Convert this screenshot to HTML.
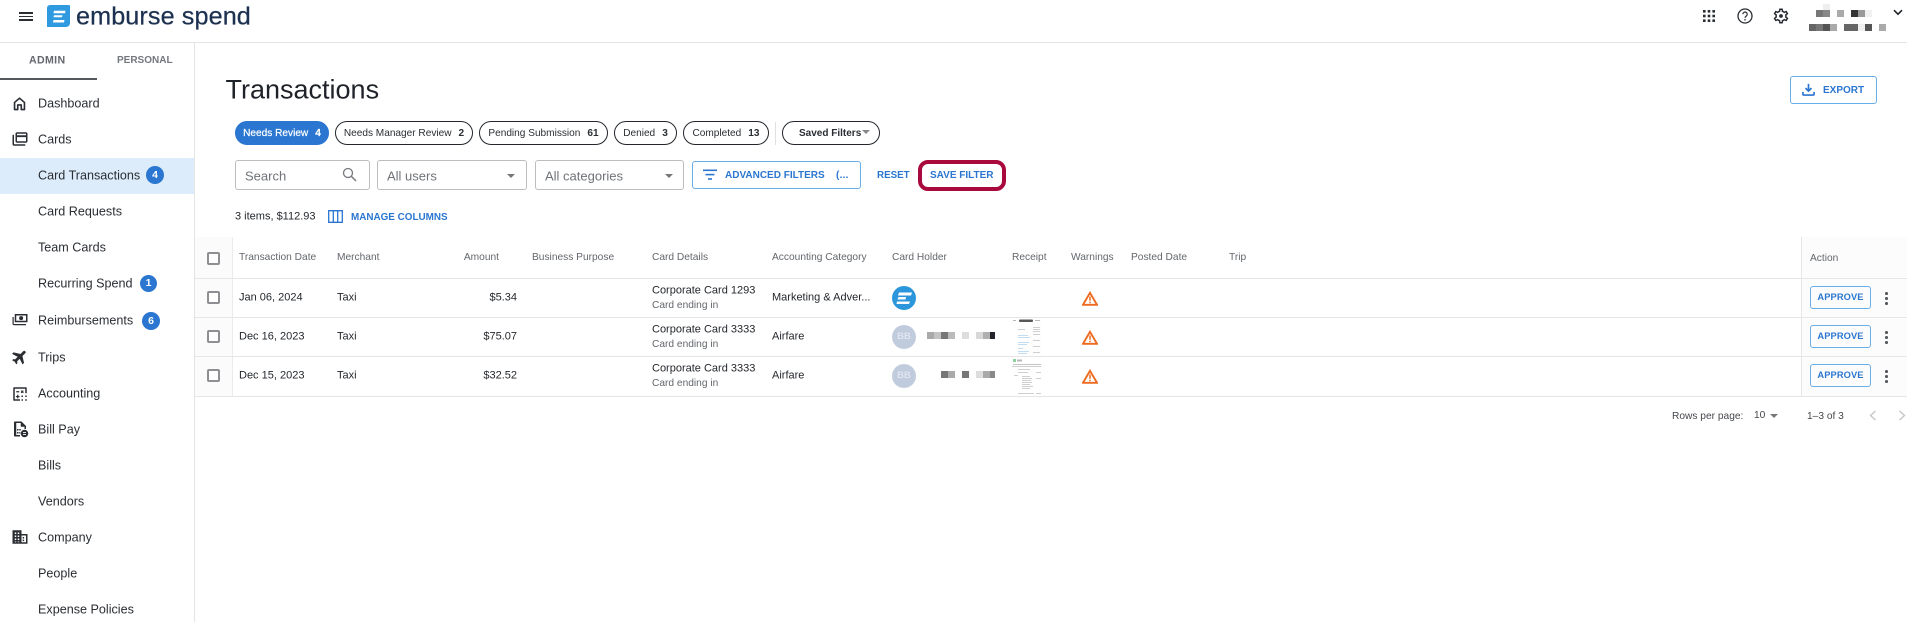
<!DOCTYPE html>
<html><head><meta charset="utf-8"><title>Transactions</title>
<style>
html,body{margin:0;padding:0;background:#fff}
body{width:1907px;height:622px;overflow:hidden;position:relative;font-family:"Liberation Sans",Arial,sans-serif;color:#1f2329}
.t{position:absolute;white-space:pre;line-height:1;transform:translateY(-50%)}
.r{position:absolute}
.nav{font-size:12.6px;left:38px;color:#2a2e33}
.ic{position:absolute;width:18px;height:18px;left:11px;fill:#2a2e33}
.badge{position:absolute;border-radius:50%;background:#2a76d0;color:#fff;font-size:10.5px;font-weight:700;text-align:center;width:18px;height:18px;line-height:18px}
.chip{position:absolute;top:121px;height:24px;box-sizing:border-box;border:1px solid #23272c;border-radius:12px;font-size:10.1px;line-height:23px;white-space:pre;text-align:center;color:#2a2e33;background:#fff}
.chip b{font-weight:700;margin-left:7px}
.box{position:absolute;box-sizing:border-box;border:1px solid #bdbdbd;border-radius:3px;top:160px;height:30px}
.ph{font-size:13px;color:#6f7378}
.th{font-size:10.2px;color:#63676c}
.td{font-size:11px;color:#23272c}
.sub{font-size:10.2px;color:#63676c}
.blue{color:#2a76d0;font-weight:700}
.line{position:absolute;left:195px;width:1712px;height:1px;background:#e6e6e6}
.cb{position:absolute;left:207px;width:13px;height:13px;box-sizing:border-box;border:2px solid #8d8f92;border-radius:2px;background:#fff}
.appr{position:absolute;left:1810px;width:61px;height:23px;box-sizing:border-box;border:1px solid #6aaee8;border-radius:3px;color:#2a76d0;font-weight:700;font-size:9.3px;line-height:21px;text-align:center;letter-spacing:.1px}
.dot{position:absolute;left:1885px;width:2.5px;height:2.5px;border-radius:50%;background:#55585c}
.av{position:absolute;left:892px;width:24px;height:24px;border-radius:50%;background:#c0ccdd;color:#dfe5ee;font-size:9.5px;font-weight:700;text-align:center;line-height:24px}
.px{position:absolute;width:7px;height:7px}
.warn{position:absolute;left:1082px;width:16px;height:15px}
.rc{position:absolute;left:1010px;width:33px;height:37px;opacity:.7}
</style></head><body>

<!-- header -->
<div class="r" style="left:0;top:42px;width:1907px;height:1px;background:#e4e4e4"></div>
<div class="r" style="left:19px;top:12px;width:14px;height:1.6px;background:#2a2e33"></div>
<div class="r" style="left:19px;top:15.5px;width:14px;height:1.6px;background:#2a2e33"></div>
<div class="r" style="left:19px;top:19px;width:14px;height:1.6px;background:#2a2e33"></div>
<svg class="r" style="left:47px;top:5px" width="23" height="22" viewBox="0 0 23 22"><path d="M3 0H22a1 1 0 0 1 1 1V18a4 4 0 0 1-4 4H0V3a3 3 0 0 1 3-3z" fill="#2f9ae0"/><path d="M7 5.8H18.5L18 8.300H6.500z M7 10.300H15.500L15 12.300H6.500z M6.500 15H17.500L17 17.500H6z" fill="#fff"/></svg>
<span class="t" style="left:76px;top:16.500px;font-size:25.200px;color:#1d3150;letter-spacing:.1px;-webkit-text-stroke:.25px #1d3150">emburse spend</span>

<svg class="r" style="left:1703px;top:10px" width="12" height="12" viewBox="0 0 12 12" fill="#2a2e33"><rect x="0" y="0" width="2.600" height="2.600"/><rect x="4.700" y="0" width="2.600" height="2.600"/><rect x="9.400" y="0" width="2.600" height="2.600"/><rect x="0" y="4.700" width="2.600" height="2.600"/><rect x="4.700" y="4.700" width="2.600" height="2.600"/><rect x="9.400" y="4.700" width="2.600" height="2.600"/><rect x="0" y="9.400" width="2.600" height="2.600"/><rect x="4.700" y="9.400" width="2.600" height="2.600"/><rect x="9.400" y="9.400" width="2.600" height="2.600"/></svg>
<svg class="r" style="left:1737px;top:8px" width="16" height="16" viewBox="0 0 16 16"><circle cx="8" cy="8" r="7" fill="none" stroke="#2a2e33" stroke-width="1.300"/><path d="M5.800 6.200a2.200 2.200 0 1 1 3.400 1.900c-.8.500-1.200.9-1.200 1.800" fill="none" stroke="#2a2e33" stroke-width="1.200"/><circle cx="8" cy="11.800" r=".8" fill="#2a2e33"/></svg>
<svg class="r" style="left:1772px;top:7px" width="18" height="18" viewBox="0 0 24 24"><path fill="#2a2e33" d="M19.43 12.98c.04-.32.07-.64.07-.98s-.03-.66-.07-.98l2.11-1.65c.19-.15.24-.42.12-.64l-2-3.46c-.12-.22-.39-.3-.61-.22l-2.49 1c-.52-.4-1.08-.73-1.69-.98l-.38-2.65C14.46 2.18 14.25 2 14 2h-4c-.25 0-.46.18-.49.42l-.38 2.65c-.61.25-1.17.59-1.69.98l-2.49-1c-.23-.09-.49 0-.61.22l-2 3.46c-.13.22-.07.49.12.64l2.11 1.65c-.04.32-.07.65-.07.98s.03.66.07.98l-2.11 1.65c-.19.15-.24.42-.12.64l2 3.46c.12.22.39.3.61.22l2.49-1c.52.4 1.08.73 1.69.98l.38 2.65c.03.24.24.42.49.42h4c.25 0 .46-.18.49-.42l.38-2.65c.61-.25 1.17-.59 1.69-.98l2.49 1c.23.09.49 0 .61-.22l2-3.46c.12-.22.07-.49-.12-.64l-2.11-1.65zM17.45 11.27c.04.31.05.52.05.73s-.02.43-.05.73l-.14 1.13.89.7 1.08.84-.7 1.21-1.27-.51-1.04-.42-.9.68c-.43.32-.84.56-1.25.73l-1.06.43-.16 1.13-.2 1.35h-1.4l-.19-1.35-.16-1.13-1.06-.43c-.43-.18-.83-.41-1.23-.71l-.91-.7-1.06.43-1.27.51-.7-1.21 1.08-.84.89-.7-.14-1.13c-.03-.31-.05-.54-.05-.74s.02-.43.05-.73l.14-1.13-.89-.7-1.08-.84.7-1.21 1.27.51 1.04.42.9-.68c.43-.32.84-.56 1.25-.73l1.06-.43.16-1.13.2-1.35h1.39l.19 1.35.16 1.13 1.06.43c.43.18.83.41 1.23.71l.91.7 1.06-.43 1.27-.51.7 1.21-1.07.85-.89.7.14 1.13zM12 9.5a2.5 2.5 0 1 0 0 5 2.5 2.5 0 0 0 0-5z"/></svg>
<div class="px" style="left:1823px;top:4px;background:#eee;height:6px"></div>
<div class="px" style="left:1816px;top:10px;background:#777"></div><div class="px" style="left:1823px;top:10px;background:#888"></div><div class="px" style="left:1837px;top:10px;background:#aaa"></div><div class="px" style="left:1851px;top:10px;background:#333"></div><div class="px" style="left:1858px;top:10px;background:#999"></div><div class="px" style="left:1865px;top:10px;background:#f1f1f1"></div>
<div class="px" style="left:1809px;top:24px;background:#666"></div><div class="px" style="left:1816px;top:24px;background:#777"></div><div class="px" style="left:1823px;top:24px;background:#555"></div><div class="px" style="left:1830px;top:24px;background:#aaa"></div><div class="px" style="left:1844px;top:24px;background:#666"></div><div class="px" style="left:1851px;top:24px;background:#666"></div><div class="px" style="left:1858px;top:24px;background:#f0f0f0"></div><div class="px" style="left:1865px;top:24px;background:#555"></div><div class="px" style="left:1879px;top:24px;background:#aaa"></div>
<svg class="r" style="left:1893px;top:9px" width="10" height="7" viewBox="0 0 10 7"><path d="M1 1.200l4 4 4-4" fill="none" stroke="#23272c" stroke-width="1.600"/></svg>

<!-- sidebar -->
<div class="r" style="left:194px;top:43px;width:1px;height:579px;background:#e4e4e4"></div>
<span class="t" style="left:29px;top:61px;font-size:10.600px;font-weight:700;color:#63676c;letter-spacing:.35px">ADMIN</span>
<span class="t" style="left:117px;top:61px;font-size:10px;font-weight:700;color:#74777c">PERSONAL</span>
<div class="r" style="left:0;top:78px;width:97px;height:2px;background:#55585f"></div>
<div class="r" style="left:0;top:158px;width:194px;height:36px;background:#dcecfa"></div>

<svg class="ic" style="top:95px;left:11px;width:17px;height:17px" viewBox="0 0 24 24"><path fill="none" stroke="#2a2e33" stroke-width="2.300" d="M5 20.500v-10L12 4.500l7 6v10h-4.500v-6.500h-5v6.500z" stroke-linejoin="round"/></svg>
<span class="t nav" style="top:103.500px">Dashboard</span>
<svg class="ic" style="top:130px" viewBox="0 0 24 24"><path d="M4 6.500H2V19c0 1.100.9 2 2 2h15v-2H4zM20 3H8c-1.100 0-2 .9-2 2v10c0 1.100.9 2 2 2h12c1.100 0 2-.9 2-2V5c0-1.100-.9-2-2-2zm0 12H8V9.500h12zM8 7V5h12v2z"/></svg>
<span class="t nav" style="top:139.500px">Cards</span>
<span class="t nav" style="top:175.500px">Card Transactions</span><div class="badge" style="left:146px;top:166px">4</div>
<span class="t nav" style="top:211.500px">Card Requests</span>
<span class="t nav" style="top:247.500px">Team Cards</span>
<span class="t nav" style="top:283.500px">Recurring Spend</span><div class="badge" style="left:140px;top:275px;width:17px;height:17px;line-height:17px">1</div>
<svg class="ic" style="top:311px" viewBox="0 0 24 24"><path d="M5 4h17v11H5zm2 2v7h13V6zm6.500.8a2.700 2.700 0 1 1 0 5.400 2.700 2.700 0 0 1 0-5.400zM2 8h1.600v9.400H20V19H4c-1.100 0-2-.9-2-2z" fill-rule="evenodd"/></svg>
<span class="t nav" style="top:320.500px">Reimbursements</span><div class="badge" style="left:142px;top:312px">6</div>
<svg class="ic" style="top:348px" viewBox="0 0 24 24"><path stroke="#2a2e33" stroke-width=".8" transform="rotate(45 12 12)" d="M21 16v-2l-8-5V3.500c0-.83-.67-1.500-1.500-1.500S10 2.670 10 3.500V9l-8 5v2l8-2.500V19l-2 1.500V22l3.500-1 3.500 1v-1.500L13 19v-5.500l8 2.500z"/></svg>
<span class="t nav" style="top:357.500px">Trips</span>
<svg class="ic" style="top:385px" viewBox="0 0 24 24"><path d="M4 3h16a1 1 0 0 1 1 1v7h-2V5H5v14h7v2H4a1 1 0 0 1-1-1V4a1 1 0 0 1 1-1zM7 8.200h4v1.600H7zM14 7l1 1 1-1 1 1-1 1 1 1-1 1-1-1-1 1-1-1 1-1-1-1zM8.200 13H9.800v1.600h1.600v1.600H9.800v1.600H8.200v-1.600H6.600v-1.600h1.600zM14 14h2v2h-2zM19 14h2v2h-2zM14 19h2v2h-2zM19 19h2v2h-2z"/></svg>
<span class="t nav" style="top:393.500px">Accounting</span>
<svg class="ic" style="top:420px" viewBox="0 0 24 24"><path d="M5 2h9l6 6v4h-2V9h-5V4H7v16h5v2H5c-.6 0-1-.4-1-1V3c0-.6.400-1 1-1zM8 12h2v2H8zm3 0h2v2h-2zm-3 4h2v2H8zm3 0h1.500v2H11z"/><circle cx="18" cy="18" r="5"/><path d="M16 16h4v1.200h-4zM16 18.800h4v1.200h-4z" fill="#fff"/></svg>
<span class="t nav" style="top:429.500px">Bill Pay</span>
<span class="t nav" style="top:465.500px">Bills</span>
<span class="t nav" style="top:501.500px">Vendors</span>
<svg class="ic" style="top:528px" viewBox="0 0 24 24"><path fill-rule="evenodd" d="M2 3h12v5h8v13H2zM5 6v2h2V6zm4 0v2h2V6zM5 10v2h2v-2zm4 0v2h2v-2zM5 14v2h2v-2zm4 0v2h2v-2zM5 18v1h2v-1zm4 0v1h2v-1zM14 10v9h6v-9zm1.500 2h2v2h-2zm0 3.500h2v2h-2z"/></svg>
<span class="t nav" style="top:537.500px">Company</span>
<span class="t nav" style="top:573.500px">People</span>
<span class="t nav" style="top:609.500px">Expense Policies</span>

<!-- page head -->
<span class="t" style="left:225.500px;top:90px;font-size:27px;color:#1f2329">Transactions</span>
<div class="r" style="left:1790px;top:76px;width:87px;height:28px;box-sizing:border-box;border:1px solid #6aaee8;border-radius:3px"></div>
<svg class="r" style="left:1802px;top:83px" width="13" height="13" viewBox="0 0 14 14"><path d="M7 1v7.500M3.800 5.500L7 8.700l3.200-3.200M1 9.500v2.500a1 1 0 0 0 1 1h10a1 1 0 0 0 1-1V9.500" fill="none" stroke="#2a76d0" stroke-width="1.800"/></svg>
<span class="t blue" style="left:1823px;top:90.500px;font-size:10px">EXPORT</span>

<!-- chips -->
<div class="chip" style="left:235px;width:94px;background:#2a76d0;border-color:#2a76d0;color:#fff;-webkit-text-stroke:.2px #fff">Needs Review<b>4</b></div>
<div class="chip" style="left:335px;width:138px">Needs Manager Review<b>2</b></div>
<div class="chip" style="left:479px;width:129px">Pending Submission<b>61</b></div>
<div class="chip" style="left:614px;width:63px">Denied<b>3</b></div>
<div class="chip" style="left:683px;width:86px">Completed<b>13</b></div>
<div class="r" style="left:775px;top:122px;width:1px;height:23px;background:#e0e0e0"></div>
<div class="chip" style="left:782px;width:98px;font-weight:700;font-size:10px;text-align:left;padding-left:16px">Saved Filters</div>
<div class="r" style="left:862px;top:130px;width:0;height:0;border:4px solid transparent;border-top:4px solid #85878a;border-bottom:0"></div>

<!-- filters -->
<div class="box" style="left:235px;width:135px"></div>
<span class="t ph" style="left:245px;top:175.500px">Search</span>
<svg class="r" style="left:342px;top:167px" width="15" height="15" viewBox="0 0 15 15"><circle cx="6" cy="6" r="4.500" fill="none" stroke="#75787c" stroke-width="1.300"/><path d="M9.500 9.500L14 14" stroke="#75787c" stroke-width="1.500"/></svg>
<div class="box" style="left:377px;width:150px"></div>
<span class="t ph" style="left:387px;top:175.500px">All users</span>
<div class="r" style="left:507px;top:174px;border:4px solid transparent;border-top:4.500px solid #777;border-bottom:0"></div>
<div class="box" style="left:535px;width:149px"></div>
<span class="t ph" style="left:545px;top:175.500px">All categories</span>
<div class="r" style="left:665px;top:174px;border:4px solid transparent;border-top:4.500px solid #777;border-bottom:0"></div>
<div class="r" style="left:692px;top:161px;width:169px;height:28px;box-sizing:border-box;border:1px solid #6aaee8;border-radius:3px"></div>
<svg class="r" style="left:703px;top:169px" width="14" height="12" viewBox="0 0 14 12" fill="#2a76d0"><rect x="0" y="0.500" width="14" height="1.600"/><rect x="2.500" y="4.800" width="9" height="1.600"/><rect x="5" y="9.200" width="4" height="1.600"/></svg>
<span class="t blue" style="left:725px;top:175.500px;font-size:10px">ADVANCED FILTERS</span>
<span class="t blue" style="left:836px;top:175.500px;font-size:10px;letter-spacing:.25px">(...</span>
<span class="t blue" style="left:877px;top:175.500px;font-size:9.800px">RESET</span>
<div class="r" style="left:918px;top:160px;width:88px;height:31px;box-sizing:border-box;border:4px solid #a90a3d;border-radius:10px"></div>
<span class="t blue" style="left:930px;top:175.500px;font-size:10px">SAVE FILTER</span>

<span class="t" style="left:235px;top:217px;font-size:11px;color:#23272c">3 items, $112.93</span>
<svg class="r" style="left:328px;top:210px" width="15" height="13" viewBox="0 0 15 13"><path d="M.7.7h13.600v11.600H.7zM5.300.7v11.600M9.700.7v11.600" fill="none" stroke="#2a76d0" stroke-width="1.300"/></svg>
<span class="t blue" style="left:351px;top:218px;font-size:9.900px">MANAGE COLUMNS</span>

<!-- table -->
<div class="r" style="left:195px;top:237px;width:37px;height:160px;background:#fbfbfb"></div>
<div class="r" style="left:232px;top:237px;width:1px;height:159px;background:#ebebeb"></div>
<div class="r" style="left:1801px;top:237px;width:106px;height:160px;background:#fcfcfc"></div>
<div class="r" style="left:1801px;top:237px;width:1px;height:159px;background:#e6e6e6"></div>
<div class="line" style="top:278px"></div><div class="line" style="top:317px"></div><div class="line" style="top:356px"></div><div class="line" style="top:396px"></div>

<div class="cb" style="top:252px"></div><div class="cb" style="top:291px"></div><div class="cb" style="top:330px"></div><div class="cb" style="top:369px"></div>

<span class="t th" style="left:239px;top:258px">Transaction Date</span>
<span class="t th" style="left:337px;top:258px">Merchant</span>
<span class="t th" style="right:1408px;top:258px">Amount</span>
<span class="t th" style="left:532px;top:258px">Business Purpose</span>
<span class="t th" style="left:652px;top:258px">Card Details</span>
<span class="t th" style="left:772px;top:258px">Accounting Category</span>
<span class="t th" style="left:892px;top:258px">Card Holder</span>
<span class="t th" style="left:1012px;top:258px">Receipt</span>
<span class="t th" style="left:1071px;top:258px">Warnings</span>
<span class="t th" style="left:1131px;top:258px">Posted Date</span>
<span class="t th" style="left:1229px;top:258px">Trip</span>
<span class="t th" style="left:1810px;top:259px">Action</span>

<span class="t td" style="left:239px;top:298px">Jan 06, 2024</span><span class="t td" style="left:337px;top:298px">Taxi</span><span class="t td" style="right:1390px;top:298px">$5.34</span>
<span class="t td" style="left:239px;top:337px">Dec 16, 2023</span><span class="t td" style="left:337px;top:337px">Taxi</span><span class="t td" style="right:1390px;top:337px">$75.07</span>
<span class="t td" style="left:239px;top:376px">Dec 15, 2023</span><span class="t td" style="left:337px;top:376px">Taxi</span><span class="t td" style="right:1390px;top:376px">$32.52</span>

<span class="t td" style="left:652px;top:291px">Corporate Card 1293</span><span class="t sub" style="left:652px;top:306px">Card ending in</span>
<span class="t td" style="left:652px;top:330px">Corporate Card 3333</span><span class="t sub" style="left:652px;top:345px">Card ending in</span>
<span class="t td" style="left:652px;top:369px">Corporate Card 3333</span><span class="t sub" style="left:652px;top:384px">Card ending in</span>

<span class="t td" style="left:772px;top:298px">Marketing &amp; Adver...</span>
<span class="t td" style="left:772px;top:337px">Airfare</span>
<span class="t td" style="left:772px;top:376px">Airfare</span>

<svg class="r" style="left:892px;top:286px" width="24" height="24" viewBox="0 0 24 24"><circle cx="12" cy="12" r="12" fill="#2c96dc"/><path d="M7 6.500H20L19 9.500H6zM6.500 11H14L13.500 13.500H5.500zM5 15.500H18L17 18H4.500z" fill="#fff"/></svg>
<div class="av" style="top:325px">BB</div>
<div class="av" style="top:364px">BB</div>

<div class="px" style="left:927px;top:332px;background:#aaa"></div><div class="px" style="left:934px;top:332px;background:#c4c4c4"></div><div class="px" style="left:941px;top:332px;background:#777"></div><div class="px" style="left:948px;top:332px;background:#bbb"></div><div class="px" style="left:962px;top:332px;background:#ddd"></div><div class="px" style="left:976px;top:332px;background:#d8d8d8"></div><div class="px" style="left:983px;top:332px;background:#b0b0b0"></div><div class="px" style="left:990px;top:332px;background:#22242a;width:5px"></div>
<div class="px" style="left:941px;top:371px;background:#777"></div><div class="px" style="left:948px;top:371px;background:#aaa"></div><div class="px" style="left:962px;top:371px;background:#777"></div><div class="px" style="left:976px;top:371px;background:#ddd"></div><div class="px" style="left:983px;top:371px;background:#aaa"></div><div class="px" style="left:990px;top:371px;background:#888;width:5px"></div>

<svg class="rc" style="top:319px" viewBox="0 0 33 37"><rect x="9" y="0.500" width="14" height="2.500" rx="1" fill="#111"/><rect x="3" y="1" width="3" height="1" fill="#999"/><rect x="25" y="1" width="5" height="1" fill="#999"/><rect x="7" y="4" width="25" height="33" fill="#fdfdfd"/><g fill="#bbb"><rect x="8" y="10" width="7" height="1"/><rect x="23" y="8" width="7" height="1"/><rect x="23" y="10" width="7" height="1"/><rect x="23" y="12" width="7" height="1"/><rect x="23" y="15" width="7" height="1"/><rect x="23" y="21" width="7" height="1"/><rect x="23" y="27" width="7" height="1"/><rect x="23" y="33" width="7" height="1"/></g><g fill="#a9cfe9"><rect x="8" y="16" width="10" height="1"/><rect x="8" y="18" width="12" height="1"/><rect x="8" y="23" width="11" height="1"/><rect x="8" y="25" width="9" height="1"/><rect x="8" y="29" width="5" height="1"/><rect x="8" y="32" width="11" height="1"/><rect x="8" y="34" width="9" height="1"/></g></svg>
<svg class="rc" style="top:358px" viewBox="0 0 33 37"><rect x="3" y="1" width="3" height="3" fill="#5cc46f"/><rect x="7" y="1.500" width="5" height="2" fill="#999"/><rect x="3" y="6" width="28" height="1" fill="#aaa"/><g fill="#bbb"><rect x="2" y="8" width="29" height="1"/><rect x="8" y="11" width="12" height="1"/><rect x="8" y="14" width="10" height="1"/><rect x="26" y="14" width="5" height="1"/><rect x="4" y="17" width="4" height="1"/><rect x="12" y="18" width="8" height="1"/><rect x="12" y="20" width="10" height="1"/><rect x="26" y="20" width="5" height="1"/><rect x="12" y="22" width="9" height="1"/><rect x="12" y="24" width="10" height="1"/><rect x="12" y="26" width="8" height="1"/><rect x="12" y="28" width="11" height="1"/><rect x="12" y="30" width="8" height="1"/><rect x="8" y="35" width="16" height="1"/><rect x="26" y="35" width="5" height="1"/></g></svg>

<svg class="warn" style="top:291px" viewBox="0 0 16 15"><path d="M8 1.800L15 13.800H1z" fill="none" stroke="#ee6a1f" stroke-width="1.900"/><path d="M8 5.500v4.300M8 10.800v1.500" stroke="#ee6a1f" stroke-width="1.500"/></svg>
<svg class="warn" style="top:330px" viewBox="0 0 16 15"><path d="M8 1.800L15 13.800H1z" fill="none" stroke="#ee6a1f" stroke-width="1.900"/><path d="M8 5.500v4.300M8 10.800v1.500" stroke="#ee6a1f" stroke-width="1.500"/></svg>
<svg class="warn" style="top:369px" viewBox="0 0 16 15"><path d="M8 1.800L15 13.800H1z" fill="none" stroke="#ee6a1f" stroke-width="1.900"/><path d="M8 5.500v4.300M8 10.800v1.500" stroke="#ee6a1f" stroke-width="1.500"/></svg>

<div class="appr" style="top:286px">APPROVE</div><div class="appr" style="top:325px">APPROVE</div><div class="appr" style="top:364px">APPROVE</div>
<div class="dot" style="top:292px"></div><div class="dot" style="top:297px"></div><div class="dot" style="top:302px"></div>
<div class="dot" style="top:331px"></div><div class="dot" style="top:336px"></div><div class="dot" style="top:341px"></div>
<div class="dot" style="top:370px"></div><div class="dot" style="top:375px"></div><div class="dot" style="top:380px"></div>

<!-- pagination -->
<span class="t" style="left:1672px;top:416.500px;font-size:10.200px;color:#45484d">Rows per page:</span>
<span class="t" style="left:1754px;top:415.500px;font-size:10.200px;color:#45484d">10</span>
<div class="r" style="left:1770px;top:414px;border:4px solid transparent;border-top:4px solid #777;border-bottom:0"></div>
<span class="t" style="left:1807px;top:416.500px;font-size:10.200px;color:#45484d">1–3 of 3</span>
<svg class="r" style="left:1869px;top:410px" width="8" height="11" viewBox="0 0 8 11"><path d="M6.500 1L1.500 5.500l5 4.500" fill="none" stroke="#c4c4c4" stroke-width="1.300"/></svg>
<svg class="r" style="left:1898px;top:410px" width="8" height="11" viewBox="0 0 8 11"><path d="M1.500 1l5 4.500-5 4.500" fill="none" stroke="#c4c4c4" stroke-width="1.300"/></svg>

</body></html>
